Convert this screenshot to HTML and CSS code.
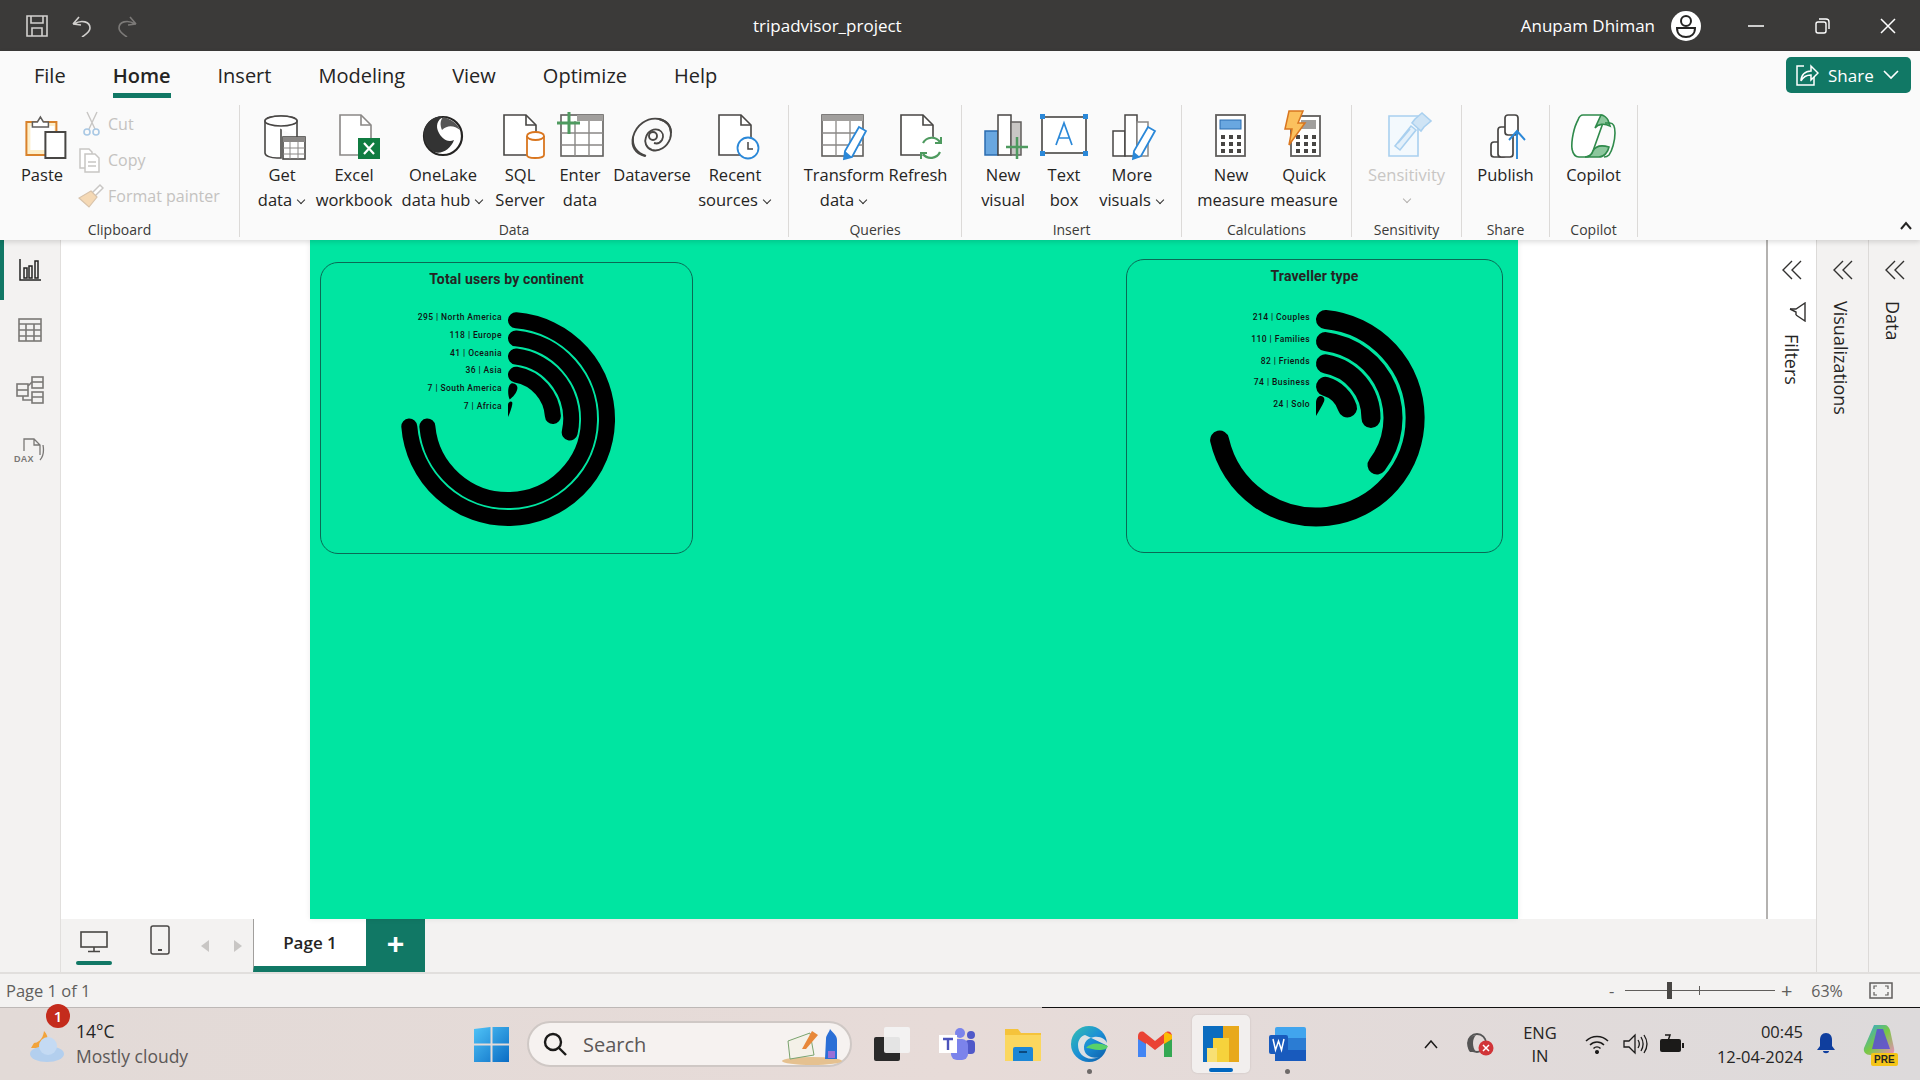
FILE: index.html
```html
<!DOCTYPE html>
<html lang="en">
<head>
<meta charset="utf-8">
<title>tripadvisor_project</title>
<link rel="stylesheet" href="styles.css">
</head>
<body>
<div class="app">

<header class="titlebar">
  <div class="qat">
    <svg width="22" height="22" viewBox="0 0 22 22" fill="none" stroke="#d2d0ce" stroke-width="1.6"><path d="M1 1h20v20H1z"/><path d="M5 1v7h12V1M6 21v-8h10v8"/></svg>
    <svg width="22" height="22" viewBox="0 0 22 22" fill="none" stroke="#d2d0ce" stroke-width="1.6"><path d="M2 9l6-7M2 9l8 1M3 9c8-5 16-2 16 4 0 4-4 6-8 9"/></svg>
    <svg width="22" height="22" viewBox="0 0 22 22" fill="none" stroke="#7c7a78" stroke-width="1.6"><path d="M20 9l-6-7M20 9l-8 1M19 9C11 4 3 7 3 13c0 4 4 6 8 9"/></svg>
  </div>
  <div class="doc-title">tripadvisor_project</div>
  <div class="user">Anupam Dhiman</div>
  <svg class="avatar" width="32" height="32" viewBox="0 0 32 32"><circle cx="16" cy="16" r="15" fill="#fff"/><circle cx="16" cy="11" r="5" fill="none" stroke="#252423" stroke-width="2"/><path d="M7 18h18c0 6-4 9-9 9s-9-3-9-9z" fill="none" stroke="#252423" stroke-width="2"/></svg>
  <div class="winctl">
    <svg width="16" height="16" viewBox="0 0 16 16" stroke="#fff" stroke-width="1.5"><path d="M0 8h16"/></svg>
    <svg width="16" height="16" viewBox="0 0 16 16" fill="none" stroke="#fff" stroke-width="1.4"><rect x="2" y="4" width="10" height="11" rx="2"/><path d="M5 1h7a3 3 0 0 1 3 3v7"/></svg>
    <svg width="16" height="16" viewBox="0 0 16 16" stroke="#fff" stroke-width="1.5"><path d="M1 1l14 14M15 1L1 15"/></svg>
  </div>
</header>

<section class="ribbon">
  <div class="tabsrow">
    <nav class="tabs">
      <span class="tab">File</span>
      <span class="tab active">Home</span>
      <span class="tab">Insert</span>
      <span class="tab">Modeling</span>
      <span class="tab">View</span>
      <span class="tab">Optimize</span>
      <span class="tab">Help</span>
    </nav>
    <button class="share">
      <svg width="24" height="24" viewBox="0 0 24 24" fill="none" stroke="#fff" stroke-width="1.5"><path d="M9 3H2v19h17v-8"/><path d="M6 18c0-6 4-10 10-10V3l7 7-7 7v-5c-4 0-8 2-10 6z"/></svg>
      <span>Share</span>
      <svg width="16" height="10" viewBox="0 0 16 10" fill="none" stroke="#fff" stroke-width="1.6"><path d="M1 1l7 7 7-7"/></svg>
    </button>
  </div>
  <div class="groups">

    <div class="group g-clip">
      <div class="btns">
        <div class="btn w-paste">
          <svg class="ico" viewBox="-3.4 0 50 46"><rect x="6" y="9" width="30" height="33" fill="#fdeec9" stroke="#d9822b" stroke-width="2"/><rect x="10" y="13" width="24" height="24" fill="#fff"/><path d="M12 9h5l3-5 3 5h5v5H12z" fill="#fff" stroke="#605e5c" stroke-width="1.5"/><rect x="25" y="19" width="20" height="26" fill="#fff" stroke="#484644" stroke-width="2"/></svg>
          <span class="lbl">Paste</span>
        </div>
        <div class="smalls">
          <div class="small"><svg width="26" height="26" viewBox="0 0 26 26" fill="none"><path d="M9 1l8 17M19 1l-8 17" stroke="#c8c6c4" stroke-width="1.4"/><circle cx="9" cy="21" r="3" stroke="#a9c8e4" stroke-width="1.6"/><circle cx="18" cy="21" r="3" stroke="#a9c8e4" stroke-width="1.6"/></svg><span>Cut</span></div>
          <div class="small"><svg width="26" height="26" viewBox="0 0 26 26" fill="#fff" stroke="#c8c6c4" stroke-width="1.5"><path d="M2 2h9l3 3v16H2z"/><path d="M7 7h10l4 4v14H7z"/><path d="M10 15h8M10 19h8"/></svg><span>Copy</span></div>
          <div class="small"><svg width="26" height="26" viewBox="0 0 26 26"><path d="M14 10L22 2l3 3-8 8z" fill="#fff" stroke="#c8c6c4" stroke-width="1.5"/><path d="M13 8l6 6-8 10-10-9z" fill="#f5d9b5" stroke="#d8c3ab" stroke-width="1.2"/></svg><span>Format painter</span></div>
        </div>
      </div>
      <div class="glabel">Clipboard</div>
    </div>

    <div class="group g-data">
      <div class="btns">
        <div class="btn w-62">
          <svg class="ico" viewBox="0 0 50 46" fill="none"><path d="M8 8v32c0 3 6 5 12 5h4V10" fill="#fff" stroke="#484644" stroke-width="1.6"/><path d="M8 8c0-3 7-5 16-5s16 2 16 5v16" fill="#fff" stroke="#484644" stroke-width="1.6"/><ellipse cx="24" cy="8" rx="16" ry="5" fill="#fff" stroke="#484644" stroke-width="1.6"/><rect x="26" y="24" width="22" height="22" fill="#fff" stroke="#484644" stroke-width="1.6"/><path d="M26 24h22v5H26z" fill="#8a8886"/><path d="M33 29v17M41 29v17M26 35h22M26 41h22" stroke="#8a8886"/></svg>
          <span class="lbl">Get</span><span class="lbl">data<i class="chev"></i></span>
        </div>
        <div class="btn w-82">
          <svg class="ico" viewBox="0 0 50 46" fill="none"><path d="M11 2h21l10 10v30H11z" fill="#fff" stroke="#8a8886" stroke-width="1.6"/><path d="M32 2v10h10" stroke="#8a8886" stroke-width="1.6"/><rect x="29" y="25" width="22" height="21" fill="#107c41"/><path d="M35 30l10 11M45 30L35 41" stroke="#fff" stroke-width="2.2"/></svg>
          <span class="lbl">Excel</span><span class="lbl">workbook</span>
        </div>
        <div class="btn w-96">
          <svg class="ico" viewBox="0 0 50 46" fill="none"><circle cx="25" cy="23" r="19" fill="#fff" stroke="#252423" stroke-width="2.2"/><path d="M6 23C5 11 15 2 25 4c-6 3-7 9-5 14 3 7 9 12 16 9-3 9-13 15-20 12-5-3-10-9-10-16z" fill="#333"/><path d="M25 4c8 2 14 6 17 13-5-4-12-6-18 0-2-5-2-9 1-13z" fill="#555"/></svg>
          <span class="lbl">OneLake</span><span class="lbl">data hub<i class="chev"></i></span>
        </div>
        <div class="btn w-58">
          <svg class="ico" viewBox="0 0 50 46" fill="none"><path d="M9 2h22l10 10v30H9z" fill="#fff" stroke="#484644" stroke-width="1.6"/><path d="M31 2v10h10" stroke="#484644" stroke-width="1.6"/><path d="M32 23v19c0 2 4 3 8 3s9-1 9-3V23" fill="#fff" stroke="#d9761f" stroke-width="1.8"/><ellipse cx="40.500" cy="23" rx="8.500" ry="4" fill="#fff" stroke="#d9761f" stroke-width="1.800"/></svg>
          <span class="lbl">SQL</span><span class="lbl">Server</span>
        </div>
        <div class="btn w-62">
          <svg class="ico" viewBox="0 0 50 46" fill="none"><rect x="6" y="2" width="42" height="41" fill="#fff" stroke="#605e5c" stroke-width="1.6"/><path d="M22 2h26v6H22z" fill="#a19f9d"/><path d="M20 8v35M34 8v35M6 20h42M6 32h42" stroke="#8a8886" stroke-width="1.400"/><path d="M14 -1v22M2 10h23" stroke="#4e9a5f" stroke-width="3"/></svg>
          <span class="lbl">Enter</span><span class="lbl">data</span>
        </div>
        <div class="btn w-82">
          <svg class="ico" viewBox="0 0 50 46" fill="none" stroke="#484644" stroke-width="1.900"><path d="M18 43C8 41 4 33 6 24 9 12 20 4 32 6c10 2 14 11 11 20-3 8-11 13-18 11-6-2-8-8-6-13 2-6 8-9 13-7 4 2 5 6 3 10-2 3-5 4-8 3"/><circle cx="26" cy="23" r="4"/><path d="M32 6c8 2 12 7 12 14M6 24c-1 9 4 16 13 19"/></svg>
          <span class="lbl">Dataverse</span>
        </div>
        <div class="btn w-84">
          <svg class="ico" viewBox="0 0 50 46" fill="none"><path d="M9 2h22l10 10v30H9z" fill="#fff" stroke="#484644" stroke-width="1.6"/><path d="M31 2v10h10" stroke="#484644" stroke-width="1.6"/><circle cx="38" cy="35" r="10.500" fill="#fff" stroke="#2b88d8" stroke-width="1.800"/><path d="M38 29v7h5" stroke="#484644" stroke-width="1.500"/></svg>
          <span class="lbl">Recent</span><span class="lbl">sources<i class="chev"></i></span>
        </div>
      </div>
      <div class="glabel">Data</div>
    </div>

    <div class="group g-query">
      <div class="btns">
        <div class="btn w-84">
          <svg class="ico" viewBox="0 0 50 46" fill="none"><rect x="3" y="2" width="41" height="41" fill="#fff" stroke="#605e5c" stroke-width="1.600"/><path d="M3 2h41v6H3z" fill="#a19f9d"/><path d="M17 8v35M31 8v35M3 20h41M3 32h41" stroke="#8a8886" stroke-width="1.300"/><path d="M40 14l7 4-14 26-8 2 1-8z" fill="#fff" stroke="#2b88d8" stroke-width="1.800"/><path d="M26 38l7 6-8 2z" fill="#2b88d8"/></svg>
          <span class="lbl">Transform</span><span class="lbl">data<i class="chev"></i></span>
        </div>
        <div class="btn w-64">
          <svg class="ico" viewBox="0 0 50 46" fill="none"><path d="M8 2h22l10 10v30H8z" fill="#fff" stroke="#484644" stroke-width="1.600"/><path d="M30 2v10h10" stroke="#484644" stroke-width="1.600"/><circle cx="38" cy="35" r="11" fill="#fff" stroke="#fff"/><path d="M30 30a10 10 0 0 1 17-1M47 39a10 10 0 0 1-17 2" stroke="#4e9a5f" stroke-width="2.200"/><path d="M48 24v6h-6M28 46v-6h6" stroke="#4e9a5f" stroke-width="2"/></svg>
          <span class="lbl">Refresh</span>
        </div>
      </div>
      <div class="glabel">Queries</div>
    </div>

    <div class="group g-insert">
      <div class="btns">
        <div class="btn w-64">
          <svg class="ico" viewBox="0 0 50 46" fill="none"><rect x="7" y="18" width="13" height="24" fill="#69a7e0" stroke="#2b6cb0" stroke-width="1.500"/><rect x="20" y="2" width="13" height="40" fill="#fff" stroke="#484644" stroke-width="1.500"/><rect x="33" y="9" width="10" height="33" fill="#c8c6c4" stroke="#605e5c" stroke-width="1.500"/><path d="M39 24v22M28 34h22" stroke="#4e9a5f" stroke-width="2.500"/></svg>
          <span class="lbl">New</span><span class="lbl">visual</span>
        </div>
        <div class="btn w-58">
          <svg class="ico" viewBox="0 0 50 46" fill="none"><rect x="3" y="4" width="44" height="36" fill="#fff" stroke="#484644" stroke-width="1.600"/><path d="M1 1h5v5H1zM44 1h5v5h-5zM1 38h5v5H1zM44 38h5v5h-5z" fill="#2b88d8"/><path d="M17 32l8-22 8 22M20 25h10" stroke="#2b88d8" stroke-width="1.700"/></svg>
          <span class="lbl">Text</span><span class="lbl">box</span>
        </div>
        <div class="btn w-78">
          <svg class="ico" viewBox="0 0 50 46" fill="none"><rect x="6" y="18" width="12" height="25" fill="#fff" stroke="#484644" stroke-width="1.500"/><rect x="18" y="2" width="12" height="41" fill="#fff" stroke="#484644" stroke-width="1.500"/><rect x="30" y="9" width="11" height="34" fill="#fff" stroke="#8a8886" stroke-width="1.500"/><path d="M41 14l7 4-14 25-8 3 1-8z" fill="#fff" stroke="#2b88d8" stroke-width="1.800"/><path d="M27 39l6 5-7 2z" fill="#2b88d8"/></svg>
          <span class="lbl">More</span><span class="lbl">visuals<i class="chev"></i></span>
        </div>
      </div>
      <div class="glabel">Insert</div>
    </div>

    <div class="group g-calc">
      <div class="btns">
        <div class="btn w-70">
          <svg class="ico" viewBox="0 0 50 46" fill="none"><rect x="10" y="2" width="29" height="41" fill="#fff" stroke="#605e5c" stroke-width="1.800"/><rect x="14" y="7" width="21" height="9" fill="#69a7e0" stroke="#2b6cb0"/><path d="M15 22h4v4h-4zM23 22h4v4h-4zM31 22h4v4h-4zM15 29h4v4h-4zM23 29h4v4h-4zM31 29h4v4h-4zM15 36h4v4h-4zM23 36h4v4h-4zM31 36h4v4h-4z" fill="#484644"/></svg>
          <span class="lbl">New</span><span class="lbl">measure</span>
        </div>
        <div class="btn w-76">
          <svg class="ico" viewBox="0 0 50 46" fill="none"><rect x="12" y="3" width="29" height="40" fill="#fff" stroke="#605e5c" stroke-width="1.800"/><rect x="22" y="7" width="15" height="9" fill="#a19f9d"/><path d="M17 22h4v4h-4zM25 22h4v4h-4zM33 22h4v4h-4zM17 29h4v4h-4zM25 29h4v4h-4zM33 29h4v4h-4zM17 36h4v4h-4zM25 36h4v4h-4zM33 36h4v4h-4z" fill="#484644"/><path d="M10 -2h14l-5 12h7L10 32l3-16H6z" fill="#fbc15e" stroke="#d9761f" stroke-width="1.500"/></svg>
          <span class="lbl">Quick</span><span class="lbl">measure</span>
        </div>
      </div>
      <div class="glabel">Calculations</div>
    </div>

    <div class="group g-sens">
      <div class="btns">
        <div class="btn w-full">
          <svg class="ico" viewBox="0 0 50 46" fill="none" stroke="#a9d0ef" stroke-width="1.600"><path d="M7 3h29v40H7z" fill="#f3f9fd"/><path d="M13 33l16-20 5 4-16 20z" fill="#e3f0fa"/><path d="M33 6l7-6 9 8-7 6-3 4-9-8z" fill="#cfe4f5"/><path d="M16 30l12-14"/></svg>
          <span class="lbl off">Sensitivity</span><span class="lbl off"><i class="chev off"></i></span>
        </div>
      </div>
      <div class="glabel">Sensitivity</div>
    </div>

    <div class="group g-share">
      <div class="btns">
        <div class="btn w-full">
          <svg class="ico" viewBox="0 0 50 46" fill="none" stroke="#484644" stroke-width="1.700"><rect x="10" y="29" width="15" height="15" rx="3" fill="#fff"/><rect x="17" y="14" width="15" height="30" rx="3" fill="#fff"/><rect x="24" y="2" width="13" height="20" rx="3" fill="#fff"/><path d="M36 46V18M28 27l8-9 8 9" stroke="#2b88d8" stroke-width="1.900"/></svg>
          <span class="lbl">Publish</span>
        </div>
      </div>
      <div class="glabel">Share</div>
    </div>

    <div class="group g-copilot">
      <div class="btns">
        <div class="btn w-full">
          <svg class="ico" viewBox="0 0 50 46" fill="none" stroke="#2f8a4b" stroke-width="1.600"><path d="M14 2h18c3 0 4 2 3 5L24 38c-1 4-4 6-8 6H10c-4 0-6-3-7-8-1-8 2-22 6-29 1-3 3-5 5-5z" fill="#fff"/><path d="M32 2c3 0 6 3 7 5l2 6c-6-3-12-2-15 2z" fill="#8cc79d"/><path d="M24 38c3-6 9-6 16-4-1 5-5 10-10 10H16c3 0 7-2 8-6z" fill="#8cc79d"/><path d="M36 10l5 0c3 0 5 4 5 10 0 8-3 18-6 22-1 1-3 2-5 2" /></svg>
          <span class="lbl">Copilot</span>
        </div>
      </div>
      <div class="glabel">Copilot</div>
    </div>

    <svg class="collapse" width="14" height="10" viewBox="0 0 14 10" fill="none" stroke="#252423" stroke-width="2"><path d="M2 8l5-6 5 6"/></svg>
  </div>
</section>

<main class="workspace">
  <aside class="rail">
    <div class="rail-item active">
      <svg width="24" height="24" viewBox="0 0 24 24" fill="none" stroke="#252423" stroke-width="1.500"><path d="M2 1v21h21"/><path d="M6 10h3v10H6zM11 8h3v12h-3zM17 3h3v17h-3z"/></svg>
    </div>
    <div class="rail-item">
      <svg width="26" height="26" viewBox="0 0 26 26" fill="none" stroke="#7a7876" stroke-width="1.600"><rect x="2" y="2" width="22" height="22"/><path d="M2 7h22M2 13h22M2 19h22M9 7v17M17 7v17"/></svg>
    </div>
    <div class="rail-item">
      <svg width="30" height="30" viewBox="0 0 30 30" fill="none" stroke="#7a7876" stroke-width="1.600"><rect x="2" y="9" width="11" height="12"/><path d="M2 15h11"/><rect x="17" y="2" width="11" height="11"/><path d="M17 7h11"/><rect x="17" y="17" width="11" height="11"/><path d="M17 22h11M13 11l4-4M8 21v4h9"/></svg>
    </div>
    <div class="rail-item">
      <div class="dax">
        <svg width="28" height="26" viewBox="0 0 28 26" fill="none" stroke="#7a7876" stroke-width="1.300"><path d="M7 14V2h10l6 6v10M17 2v6h6M26 8c1 6 0 12-3 15"/></svg>
        <span>DAX</span>
      </div>
    </div>
  </aside>

  <div class="center">
    <div class="canvas-row">
      <div class="stage">
        <div class="page">
          <article class="card card-a">
            <h2 class="card-title">Total users by continent</h2>
            <div class="plot plot-a">
              <svg width="220" height="220" viewBox="0 0 220 220" fill="none" stroke="#000" stroke-width="16" stroke-linecap="round">
                <path d="M118 11.320A99 99 0 1 1 11.300 117.500"/>
                <path d="M118 29.400A81 81 0 1 1 29.350 117.500"/>
                <path d="M118 47.500A63 63 0 0 1 171.700 123.500"/>
                <path d="M118 65.700A45 45 0 0 1 154.900 107"/>
                <path d="M111.700 90.500C109 84 110 75 114 74.200A4.800 4.800 0 0 1 119.300 80C118.500 84 115 88 111.700 90.500Z" fill="#000" stroke="none"/>
                <path d="M110 108L110 96C110 93 113 91.800 114.200 93.200C115 95 112 104 110 108Z" fill="#000" stroke="none"/>
              </svg>
              <ul class="legend legend-a">
                <li>295 | North America</li><li>118 | Europe</li><li>41 | Oceania</li><li>36 | Asia</li><li>7 | South America</li><li>7 | Africa</li>
              </ul>
            </div>
          </article>
          <article class="card card-b">
            <h2 class="card-title">Traveller type</h2>
            <div class="plot plot-b">
              <svg width="230" height="230" viewBox="0 0 230 230" fill="none" stroke="#000" stroke-width="19" stroke-linecap="round">
                <path d="M124.500 16.460A99 99 0 1 1 18.600 137"/>
                <path d="M124.500 38.600A77 77 0 0 1 176 162"/>
                <path d="M124.500 60.800A55 55 0 0 1 170 115.500"/>
                <path d="M124.500 83.400A33 33 0 0 1 146.500 105"/>
                <path d="M115 113L115 100C115 95 118 92.500 120 93C123 93.500 124 96 123 98.500C121 103 118 108 115 113Z" fill="#000" stroke="none"/>
              </svg>
              <ul class="legend legend-b">
                <li>214 | Couples</li><li>110 | Families</li><li>82 | Friends</li><li>74 | Business</li><li>24 | Solo</li>
              </ul>
            </div>
          </article>
        </div>
      </div>
      <aside class="pane pane-filters">
        <svg class="dbl" width="20" height="20" viewBox="0 0 20 20" fill="none" stroke="#323130" stroke-width="1.400"><path d="M10 1L1 10l9 9M19 1l-9 9 9 9"/></svg>
        <svg class="funnel" width="18" height="20" viewBox="0 0 18 20" fill="none" stroke="#323130" stroke-width="1.400"><path d="M1 7h6l9-6v18l-9-6"/><path d="M1 7l6 3v3"/></svg>
        <span class="vtext">Filters</span>
      </aside>
    </div>
    <div class="tabbar">
      <div class="view active-view">
        <svg width="28" height="22" viewBox="0 0 28 22" fill="none" stroke="#484644" stroke-width="1.600"><rect x="1" y="1" width="26" height="15"/><path d="M14 16v4M8 20.500h12"/></svg>
      </div>
      <div class="view">
        <svg width="20" height="30" viewBox="0 0 20 30" fill="none" stroke="#484644" stroke-width="1.500"><rect x="1" y="1" width="18" height="28" rx="2"/><path d="M8 25h4" stroke-width="2"/></svg>
      </div>
      <div class="pager">
        <i class="tri tri-l"></i><i class="tri tri-r"></i>
      </div>
      <div class="pagetab">Page 1</div>
      <div class="addtab">+</div>
    </div>
  </div>

  <aside class="pane pane-side">
    <svg class="dbl" width="20" height="20" viewBox="0 0 20 20" fill="none" stroke="#323130" stroke-width="1.400"><path d="M10 1L1 10l9 9M19 1l-9 9 9 9"/></svg>
    <span class="vtext">Visualizations</span>
  </aside>
  <aside class="pane pane-side">
    <svg class="dbl" width="20" height="20" viewBox="0 0 20 20" fill="none" stroke="#323130" stroke-width="1.400"><path d="M10 1L1 10l9 9M19 1l-9 9 9 9"/></svg>
    <span class="vtext">Data</span>
  </aside>
</main>

<footer class="status">
  <span class="pageinfo">Page 1 of 1</span>
  <div class="zoomer">
    <span class="zm">-</span>
    <div class="slider"><i class="thumb"></i><i class="tick"></i></div>
    <span class="zp">+</span>
    <span class="pct">63%</span>
    <svg width="24" height="17" viewBox="0 0 24 17" fill="none" stroke="#605e5c" stroke-width="1.500"><rect x="1" y="1" width="22" height="15"/><path d="M5 7V4h3M16 4h3v3M19 10v3h-3M8 13H5v-3" stroke-width="1.200"/></svg>
  </div>
</footer>
<div class="statusline"></div>

<footer class="taskbar">
  <div class="weather">
    <svg width="38" height="38" viewBox="0 0 38 38"><path d="M6 18c3 0 9-3 10-12 6 6 4 14 0 17H3z" fill="#f2a33a"/><ellipse cx="19" cy="29" rx="17" ry="8" fill="#b3cfee"/><circle cx="20" cy="21" r="9" fill="#c4daf3"/></svg>
    <span class="badge">1</span>
    <div class="wtext"><span>14°C</span><span class="wsub">Mostly cloudy</span></div>
  </div>
  <div class="slot slot-win">
    <svg width="35" height="35" viewBox="0 0 35 35"><defs><linearGradient id="wg" x1="0" y1="0" x2="1" y2="1"><stop offset="0" stop-color="#4fc3f7"/><stop offset="1" stop-color="#0a6cc4"/></linearGradient></defs><path d="M0 2l16.500-2v16.500H0zM18.500 0H35v16.500H18.500zM0 18.500h16.500V35H0zM18.500 18.500H35V35H18.500z" fill="url(#wg)"/></svg>
  </div>
  <div class="search">
    <svg width="24" height="24" viewBox="0 0 24 24" fill="none" stroke="#1b1a19" stroke-width="2.400"><circle cx="10" cy="10" r="8"/><path d="M16 16l7 7"/></svg>
    <span>Search</span>
    <svg class="searchart" width="62" height="38" viewBox="0 0 62 38"><ellipse cx="30" cy="34" rx="30" ry="4" fill="#e5c190"/><path d="M6 14l22-8 4 22-24 4z" fill="#f4f1e8" stroke="#7aa36f"/><path d="M30 4l6 4-12 14-4 0z" fill="#e8883a"/><path d="M44 12c0-4 3-6 4-10 3 4 7 6 7 11v19H43z" fill="#2b6fd6"/><path d="M46 24h7v7h-7z" fill="#9a6fd6"/></svg>
  </div>
  <div class="apps">
    <div class="slot">
      <svg width="37" height="36" viewBox="0 0 37 36"><rect x="1" y="11" width="26" height="24" rx="2" fill="#2a2a2a"/><rect x="11" y="1" width="26" height="26" rx="2" fill="#f4f4f4" opacity=".92"/></svg>
    </div>
    <div class="slot">
      <svg width="37" height="34" viewBox="0 0 37 34"><circle cx="21" cy="6" r="5" fill="#7b83eb"/><circle cx="32" cy="8" r="4" fill="#5059c9"/><rect x="26" y="13" width="10" height="14" rx="4" fill="#5059c9"/><rect x="12" y="12" width="17" height="21" rx="6" fill="#7b83eb"/><rect x="0" y="8" width="18" height="18" fill="#fff"/><path d="M4 12h10M9 12v11" stroke="#4b53bc" stroke-width="2.400"/></svg>
    </div>
    <div class="slot">
      <svg width="36" height="34" viewBox="0 0 36 34"><path d="M0 2h13l3 4h20v28H0z" fill="#f5c33b"/><path d="M0 8h36v26H0z" fill="#fbd75f"/><path d="M10 20h16a2 2 0 0 1 2 2v12H8V22a2 2 0 0 1 2-2z" fill="#1d87d6"/><path d="M14 25h8" stroke="#0b4a80" stroke-width="2"/></svg>
    </div>
    <div class="slot dotted">
      <svg width="38" height="36" viewBox="0 0 38 36"><defs><linearGradient id="eg" x1="0" y1="0" x2="1" y2="1"><stop offset="0" stop-color="#35c1b0"/><stop offset=".5" stop-color="#1a8fd6"/><stop offset="1" stop-color="#0c5aa6"/></linearGradient></defs><circle cx="19" cy="18" r="18" fill="url(#eg)"/><path d="M38 20c-1-7-8-10-14-9-8 1-12 8-9 15 2 4 8 7 14 5-12 5-21-2-21-12 0-5 3-9 7-10" fill="#f0e9e6" opacity=".9"/><path d="M16 22c4-5 12-6 22-2-1 3-4 4-9 4-5 0-9-2-13-2z" fill="#58d26a"/></svg>
    </div>
    <div class="slot">
      <svg width="34" height="26" viewBox="0 0 34 26"><path d="M0 5c0-4 4-6 7-3l10 8 10-8c3-3 7-1 7 3v21h-8V12l-9 7-9-7v14H0z" fill="#ea4335"/><path d="M0 8l8 5v13H0z" fill="#4285f4"/><path d="M26 13l8-5v18h-8z" fill="#34a853"/><path d="M28 1l6 3v4l-8 5V3z" fill="#fbbc04"/></svg>
    </div>
    <div class="slot slot-on">
      <svg width="36" height="36" viewBox="0 0 36 36"><rect width="36" height="36" fill="#0b6cbf"/><rect x="20" y="0" width="16" height="36" fill="#e8a91c"/><rect x="10" y="12" width="16" height="24" fill="#f6d23c"/><rect x="4" y="22" width="10" height="14" fill="#f8e074"/></svg>
      <i class="runbar"></i>
    </div>
    <div class="slot dotted">
      <svg width="37" height="34" viewBox="0 0 37 34"><rect x="6" y="0" width="31" height="34" rx="2" fill="#41a5ee"/><rect x="6" y="11" width="31" height="12" fill="#2b7cd3"/><rect x="6" y="23" width="31" height="11" fill="#185abd"/><rect x="0" y="8" width="19" height="19" rx="2" fill="#185abd"/><path d="M4 12l2.500 11L9.500 14l3 9L15 12" stroke="#fff" stroke-width="1.500" fill="none"/></svg>
    </div>
  </div>
  <div class="tray">
    <svg class="t-up" width="14" height="9" viewBox="0 0 14 9" fill="none" stroke="#1b1a19" stroke-width="1.500"><path d="M1 8l6-7 6 7"/></svg>
    <svg class="t-od" width="28" height="24" viewBox="0 0 28 24"><path d="M4 20C-1 14 2 4 10 3c-4 4-4 12 0 17z" fill="#555"/><circle cx="11" cy="11" r="9" fill="none" stroke="#555" stroke-width="1.800"/><circle cx="20" cy="16" r="7.500" fill="#d13438"/><path d="M17 13l6 6M23 13l-6 6" stroke="#fff" stroke-width="1.500"/></svg>
    <div class="lang"><span>ENG</span><span>IN</span></div>
    <svg class="t-wifi" width="24" height="20" viewBox="0 0 24 20" fill="none" stroke="#1b1a19" stroke-width="1.500"><path d="M1 7c6-6 16-6 22 0M5 11c4-4 10-4 14 0M8.500 14.500c2-2 5-2 7 0"/><circle cx="12" cy="18" r="1.300" fill="#1b1a19"/></svg>
    <svg class="t-vol" width="26" height="22" viewBox="0 0 26 22" fill="none" stroke="#1b1a19" stroke-width="1.300"><path d="M1 8h5l6-6v18l-6-6H1zM15 7c2 3 2 5 0 8M18 4c3 5 3 9 0 14M21 2c4 6 4 12 0 18"/></svg>
    <svg class="t-bat" width="26" height="20" viewBox="0 0 26 20"><rect x="1" y="5" width="21" height="13" rx="2" fill="#1b1a19"/><path d="M23 9h2v5h-2z" fill="#1b1a19"/><path d="M6 1h5l-2 6h3" fill="none" stroke="#1b1a19" stroke-width="1.500"/></svg>
    <div class="clock"><span>00:45</span><span>12-04-2024</span></div>
    <svg class="t-bell" width="18" height="22" viewBox="0 0 18 22"><path d="M9 0c4 0 6 3 6 7v6l3 4H0l3-4V7c0-4 2-7 6-7z" fill="#0f3e9e"/><path d="M6 18h6c0 3-6 3-6 0z" fill="#0f3e9e"/></svg>
    <div class="copilot-tray">
      <svg width="34" height="30" viewBox="0 0 34 30"><defs><linearGradient id="cg" x1="0" y1="0" x2="1" y2="1"><stop offset="0" stop-color="#2aa6e8"/><stop offset=".5" stop-color="#7ac943"/><stop offset="1" stop-color="#f08ac0"/></linearGradient></defs><path d="M12 0h11c2 0 4 2 5 5l4 18c1 4-1 7-5 7H8c-4 0-7-3-6-7z" fill="url(#cg)"/><path d="M15 4h6l7 20H10z" fill="#5a4bd6" opacity=".85"/></svg>
      <span class="pre">PRE</span>
    </div>
  </div>
</footer>
</div>
</body>
</html>
```
FILE: styles.css
```css
* { box-sizing: border-box; }
html, body { margin: 0; padding: 0; }
body { width: 1920px; height: 1080px; overflow: hidden; font-family: "Open Sans", "Noto Sans", sans-serif; color: #252423; background: #fff; }
.app { display: flex; flex-direction: column; height: 1080px; }

/* title bar */
.titlebar { height: 51px; flex: none; background: #3b3a39; display: flex; align-items: center; color: #fff; font-size: 17px; }
.qat { display: flex; gap: 23px; padding-left: 26px; width: 753px; }
.doc-title { width: 147px; white-space: nowrap; text-align: center; }
.user { margin-left: auto; white-space: nowrap; }
.avatar { margin-left: 15px; }
.winctl { display: flex; gap: 50px; margin-left: 46px; padding-right: 24px; align-items: center; }

/* ribbon */
.ribbon { height: 189px; flex: none; background: #fafafa; position: relative; z-index: 2; box-shadow: 0 2px 5px rgba(0,0,0,.14); }
.tabsrow { height: 54px; display: flex; align-items: flex-start; justify-content: space-between; padding-right: 9px; }
.tabs { display: flex; gap: 47px; padding-left: 34px; height: 47px; }
.tab { font-size: 20px; line-height: 50px; white-space: nowrap; position: relative; }
.tab.active { font-weight: 600; }
.tab.active::after { content: ""; position: absolute; left: 0; right: 0; bottom: 0; height: 5px; background: #117865; }
.share { margin-top: 6px; width: 125px; height: 36px; background: #117865; border: 0; border-radius: 5px; color: #fff; font: 400 17px "Open Sans", sans-serif; display: flex; align-items: center; gap: 9px; padding: 0 9px; }
.groups { display: flex; position: relative; }
.group { height: 132px; border-right: 1px solid #dcdad8; flex: none; }
.g-clip { width: 240px; }
.g-data { width: 549px; }
.g-query { width: 173px; }
.g-insert { width: 220px; }
.g-calc { width: 170px; }
.g-sens { width: 110px; }
.g-share { width: 88px; }
.g-copilot { width: 88px; }
.btns { height: 115px; display: flex; padding-top: 8px; }
.g-clip .btns { padding-left: 9px; padding-top: 8px; }
.g-data .btns { padding-left: 11px; }
.g-query .btns { padding-left: 13px; }
.g-insert .btns { padding-left: 9px; }
.g-calc .btns { padding-left: 14px; }
.glabel { font-size: 14px; line-height: 20px; height: 17px; text-align: center; color: #3b3a39; white-space: nowrap; }
.btn { display: flex; flex-direction: column; align-items: center; flex: none; }
.w-paste { width: 66px; }
.w-58 { width: 58px; } .w-62 { width: 62px; } .w-64 { width: 64px; } .w-70 { width: 70px; }
.w-76 { width: 76px; } .w-78 { width: 78px; } .w-82 { width: 82px; } .w-84 { width: 84px; } .w-96 { width: 96px; }
.w-full { width: 100%; }
.ico { width: 50px; height: 46px; flex: none; margin-bottom: 3px; overflow: visible; }
.lbl { font-size: 16.5px; line-height: 25px; height: 25px; white-space: nowrap; color: #252423; }
.lbl.off { color: #c8c6c4; }
.chev { display: inline-block; width: 6px; height: 6px; border: solid #323130; border-width: 0 1.5px 1.5px 0; transform: rotate(45deg); margin: 0 2px 3px 6px; }
.chev.off { border-color: #b3b0ad; margin: 0 0 4px 0; }
.smalls { margin-top: -7px; padding-left: 3px; }
.small { height: 36px; display: flex; align-items: center; gap: 4px; font-size: 16px; color: #c4c2c0; white-space: nowrap; }
.collapse { position: absolute; right: 7px; top: 116px; }

/* workspace */
.workspace { height: 732px; flex: none; display: flex; }
.rail { width: 61px; flex: none; background: #f3f2f1; border-right: 1px solid #e1dfdd; display: flex; flex-direction: column; }
.rail-item { height: 60px; display: flex; align-items: center; justify-content: center; border-left: 4px solid transparent; padding-right: 4px; }
.rail-item.active { border-left-color: #117865; }
.dax { position: relative; width: 30px; height: 26px; }
.dax svg { position: absolute; right: 0; top: 0; }
.dax span { position: absolute; left: -1px; bottom: -1px; font: 700 9px "Liberation Sans", sans-serif; color: #7a7876; letter-spacing: .3px; }
.center { flex: 1; display: flex; flex-direction: column; min-width: 0; }
.canvas-row { height: 679px; flex: none; display: flex; }
.stage { flex: 1; background: #fff; padding-left: 249px; border-right: 2px solid #b4b2b0; }
.page { width: 1208px; height: 679px; background: #00e5a1; position: relative; box-shadow: 0 0 6px rgba(0,0,0,.08); }
.card { position: absolute; border: 1px solid #0a6a55; border-radius: 18px; }
.card-a { left: 10px; top: 22px; width: 373px; height: 292px; }
.card-b { left: 816px; top: 19px; width: 377px; height: 294px; }
.card-title { margin: 0; height: 32px; font: 700 14px/32px Roboto, "Liberation Sans", sans-serif; letter-spacing: .15px; text-align: center; color: #252423; }
.plot { position: relative; }
.plot svg { display: block; overflow: visible; }
.plot-a { margin: 14px 0 0 77px; width: 220px; }
.plot-b { margin: 11px 0 0 74px; width: 230px; }
.legend { position: absolute; margin: 0; padding: 0; list-style: none; text-align: right; font: 500 8.5px Roboto, "Liberation Sans", sans-serif; letter-spacing: .42px; color: #111; white-space: nowrap; }
.legend-a { right: 116px; top: 0; line-height: 17.8px; }
.legend-b { right: 121px; top: 4px; line-height: 21.75px; }

.pane { flex: none; display: flex; flex-direction: column; align-items: center; }
.pane-filters { width: 48px; background: #fff; padding-top: 20px; }
.pane-side { width: 52px; background: #f3f2f1; border-left: 1px solid #dcdad8; padding-top: 20px; }
.dbl { flex: none; }
.funnel { margin: 22px 0 0 12px; }
.vtext { writing-mode: vertical-rl; font-size: 18px; font-weight: 500; white-space: nowrap; color: #252423; margin-top: 12px; line-height: 24px; margin-right: 4px; }
.pane-side .vtext { margin-top: 21px; }
.pane-filters .vtext { margin-top: 12px; margin-right: 0; }

.tabbar { height: 53px; flex: none; background: #f3f2f1; display: flex; align-items: stretch; }
.view { display: flex; align-items: center; justify-content: center; height: 100%; padding-bottom: 8px; position: relative; }
.view:nth-child(1) { margin-left: 15px; width: 36px; }
.view:nth-child(2) { margin-left: 38px; width: 20px; padding-bottom: 12px; }
.active-view::after { content: ""; position: absolute; left: 0; right: 0; bottom: 7px; height: 4px; border-radius: 2px; background: #117865; }
.pager { display: flex; align-items: center; gap: 25px; margin-left: 31px; width: 52px; }
.tri { width: 0; height: 0; border-top: 6px solid transparent; border-bottom: 6px solid transparent; }
.tri-l { border-right: 8px solid #c8c6c4; }
.tri-r { border-left: 8px solid #c8c6c4; }
.pagetab { width: 113px; background: #fff; border-left: 1px solid #a19f9d; border-bottom: 6px solid #117865; font-size: 17px; font-weight: 600; display: flex; align-items: center; justify-content: center; }
.addtab { width: 59px; background: #117865; color: #fff; font: 700 30px/50px "Liberation Sans", sans-serif; text-align: center; }

/* status */
.status { height: 35px; flex: none; background: #f3f2f1; border-top: 2px solid #e1dfdd; display: flex; align-items: center; justify-content: space-between; padding: 0 27px 0 6px; font-size: 16.5px; color: #605e5c; }
.statusline { height: 1px; flex: none; background: linear-gradient(90deg, #bdb8b6 1042px, #111 1042px); }
.pageinfo { white-space: nowrap; }
.zoomer { display: flex; align-items: center; }
.zm { width: 12px; }
.slider { width: 150px; height: 1.500px; background: #605e5c; position: relative; margin-left: 4px; }
.thumb { position: absolute; left: 42px; top: -8px; width: 5px; height: 17px; background: #484644; }
.tick { position: absolute; left: 74px; top: -4px; width: 1px; height: 9px; background: #605e5c; }
.zp { margin-left: 6px; width: 22px; font-size: 20px; }
.pct { width: 66px; font-size: 16px; text-align: center; padding-right: 18px; }

/* taskbar */
.taskbar { height: 72px; flex: none; background: linear-gradient(90deg, #e2dad7, #e7dbd8 50%, #dddadb); display: flex; align-items: center; }
.weather { width: 455px; flex: none; padding-left: 28px; display: flex; align-items: center; position: relative; gap: 10px; }
.badge { position: absolute; left: 46px; top: -15px; width: 24px; height: 24px; border-radius: 50%; background: #c42b1c; color: #fff; font-size: 15px; font-weight: 600; line-height: 24px; text-align: center; }
.wtext { display: flex; flex-direction: column; font-size: 17.500px; line-height: 25px; white-space: nowrap; color: #252423; }
.wsub { color: #5c5857; }
.slot { width: 66px; flex: none; height: 72px; display: flex; align-items: center; justify-content: center; position: relative; }
.slot-win { width: 72px; }
.search { width: 325px; height: 46px; flex: none; border-radius: 23px; background: #f6f2f0; border: 2px solid #cfc8c5; display: flex; align-items: center; padding-left: 14px; gap: 16px; font-size: 20px; color: #5c5857; position: relative; }
.searchart { position: absolute; right: 6px; top: 4px; }
.apps { display: flex; margin-left: 6px; flex: none; }
.dotted::after { content: ""; position: absolute; left: 50%; bottom: 6px; width: 5px; height: 5px; margin-left: -2.500px; border-radius: 50%; background: #6e6a69; }
.slot-on::before { content: ""; position: absolute; left: 4px; right: 4px; top: 7px; bottom: 7px; background: #f2efee; border-radius: 5px; box-shadow: 0 0 2px rgba(0,0,0,.15); }
.slot-on svg { position: relative; }
.runbar { position: absolute; left: 21px; right: 21px; bottom: 8px; height: 4px; border-radius: 2px; background: #0067c0; }
.tray { display: flex; align-items: center; flex: 1; position: relative; height: 72px; padding-left: 104px; }
.t-od { margin-left: 28px; }
.lang { width: 60px; margin-left: 16px; display: flex; flex-direction: column; align-items: center; font-size: 16.500px; line-height: 23px; }
.t-wifi { margin-left: 15px; }
.t-vol { margin-left: 14px; }
.t-bat { margin-left: 10px; }
.clock { width: 118px; margin-left: 0; display: flex; flex-direction: column; align-items: flex-end; font-size: 16.500px; line-height: 25px; white-space: nowrap; }
.t-bell { margin-left: 14px; }
.copilot-tray { position: relative; width: 34px; height: 38px; margin-left: 27px; }
.pre { position: absolute; left: 9px; bottom: -3px; background: #f5c518; font: 700 10px/13px "Liberation Sans", sans-serif; padding: 0 3px; border-radius: 2px; color: #252423; }
```
